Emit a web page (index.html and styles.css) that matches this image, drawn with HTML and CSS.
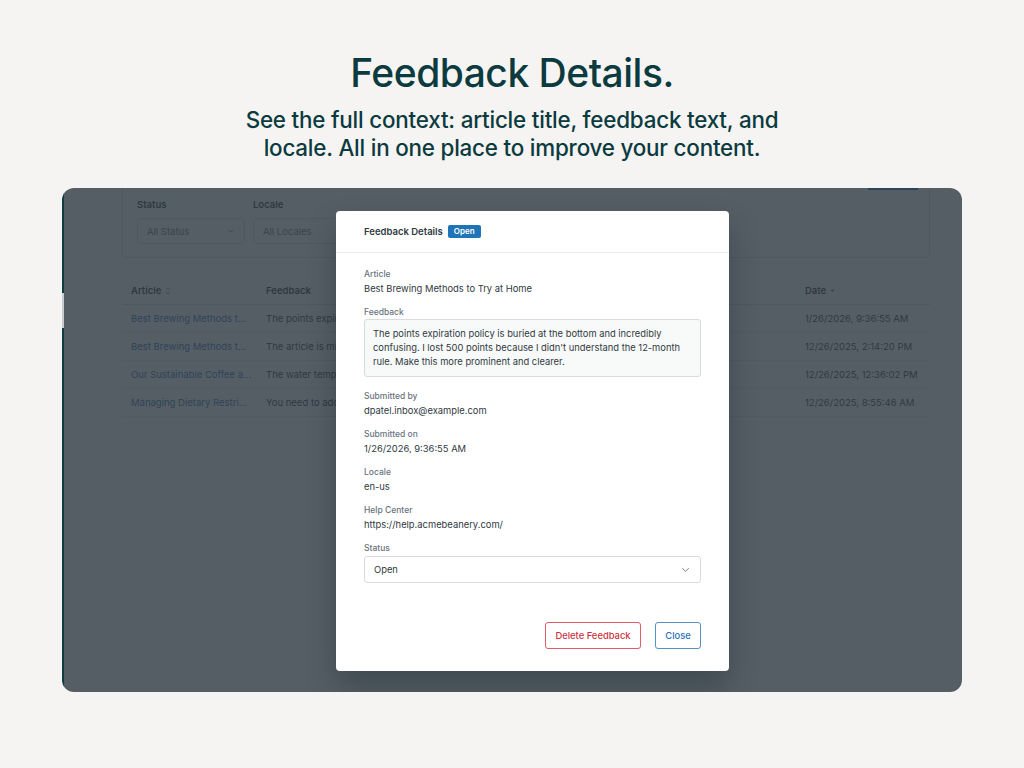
FILE: index.html
```html
<!DOCTYPE html>
<html lang="en">
<head>
<meta charset="utf-8">
<title>Feedback Details</title>
<link rel="stylesheet" href="styles.css">
</head>
<body>
<div class="page">
  <header class="hero">
    <h1 class="hero-title">Feedback Details.</h1>
    <p class="hero-sub">See the full context: article title, feedback text, and<br>locale. All in one place to improve your content.</p>
  </header>

  <section class="panel">
    <div class="rail"><span class="rail-active"></span></div>
    <div class="app">
      <div class="toolbar"><span class="btn-edge"></span></div>
      <div class="filter-card">
        <div class="filter">
          <div class="filter-label">Status</div>
          <div class="fselect fselect-status">
            <span>All Status</span>
            <svg class="chev" viewBox="0 0 12 12" width="10" height="10"><path d="M3 4.5l3 3 3-3" fill="none" stroke="currentColor" stroke-width="1"/></svg>
          </div>
        </div>
        <div class="filter">
          <div class="filter-label">Locale</div>
          <div class="fselect fselect-locale">
            <span>All Locales</span>
          </div>
        </div>
      </div>

      <div class="table">
        <div class="trow thead">
          <div class="c c-article">Article
            <svg class="sort" viewBox="0 0 10 12" width="8" height="10"><path d="M2.5 4.5L5 2l2.5 2.5M2.5 7.5L5 10l2.5-2.5" fill="none" stroke="currentColor" stroke-width="1"/></svg>
          </div>
          <div class="c c-feedback">Feedback</div>
          <div class="c c-locale">Locale</div>
          <div class="c c-status">Status</div>
          <div class="c c-date">Date
            <svg class="sortdown" viewBox="0 0 10 10" width="7" height="7"><path d="M2 4h6L5 7z" fill="currentColor"/></svg>
          </div>
        </div>
        <div class="trow">
          <div class="c c-article link">Best Brewing Methods t...</div>
          <div class="c c-feedback">The points expiration policy is buried...</div>
          <div class="c c-locale">en-us</div>
          <div class="c c-status">Open</div>
          <div class="c c-date">1/26/2026, 9:36:55 AM</div>
        </div>
        <div class="trow">
          <div class="c c-article link">Best Brewing Methods t...</div>
          <div class="c c-feedback">The article is missing a section...</div>
          <div class="c c-locale">en-us</div>
          <div class="c c-status">Open</div>
          <div class="c c-date">12/26/2025, 2:14:20 PM</div>
        </div>
        <div class="trow">
          <div class="c c-article link">Our Sustainable Coffee a...</div>
          <div class="c c-feedback">The water temperature guide is...</div>
          <div class="c c-locale">en-us</div>
          <div class="c c-status">Open</div>
          <div class="c c-date">12/26/2025, 12:36:02 PM</div>
        </div>
        <div class="trow">
          <div class="c c-article link">Managing Dietary Restri...</div>
          <div class="c c-feedback">You need to add more detail...</div>
          <div class="c c-locale">en-us</div>
          <div class="c c-status">Open</div>
          <div class="c c-date">12/26/2025, 8:55:46 AM</div>
        </div>
      </div>
      <div class="backdrop"></div>
    </div>

    <div class="modal">
      <div class="modal-head">
        <span class="modal-title">Feedback Details</span>
        <span class="badge">Open</span>
      </div>
      <div class="modal-body">
        <div class="field">
          <div class="label">Article</div>
          <div class="value">Best Brewing Methods to Try at Home</div>
        </div>
        <div class="field field-feedback">
          <div class="label label-tight">Feedback</div>
          <div class="quote">The points expiration policy is buried at the bottom and incredibly confusing. I lost 500 points because I didn't understand the 12-month rule. Make this more prominent and clearer.</div>
        </div>
        <div class="field">
          <div class="label">Submitted by</div>
          <div class="value">dpatel.inbox@example.com</div>
        </div>
        <div class="field">
          <div class="label">Submitted on</div>
          <div class="value">1/26/2026, 9:36:55 AM</div>
        </div>
        <div class="field">
          <div class="label">Locale</div>
          <div class="value">en-us</div>
        </div>
        <div class="field">
          <div class="label">Help Center</div>
          <div class="value">https://help.acmebeanery.com/</div>
        </div>
        <div class="field field-last">
          <div class="label">Status</div>
          <div class="mselect">
            <span>Open</span>
            <svg class="mchev" viewBox="0 0 12 12" width="11" height="11"><path d="M2.5 4.5L6 8l3.5-3.5" fill="none" stroke="currentColor" stroke-width="1"/></svg>
          </div>
        </div>
      </div>
      <div class="modal-foot">
        <button class="btn btn-danger">Delete Feedback</button>
        <button class="btn btn-basic">Close</button>
      </div>
    </div>
  </section>
</div>
</body>
</html>
```

FILE: styles.css
```css
* { box-sizing: border-box; }

html, body {
  margin: 0;
  padding: 0;
}

body {
  background: #f5f4f2;
  font-family: Inter, "Noto Sans", "Liberation Sans", sans-serif;
  color: #2f3941;
}

.page {
  width: 1024px;
  height: 768px;
  display: flex;
  flex-direction: column;
  align-items: center;
  overflow: hidden;
}

.hero {
  text-align: center;
  color: #0b3a3f;
  padding-top: 49px;
}

.hero-title {
  margin: 0;
  font-size: 39px;
  line-height: 48px;
  font-weight: 500;
  letter-spacing: -0.5px;
}

.hero-sub {
  margin: 9px 0 0;
  font-size: 22.4px;
  line-height: 28px;
  font-weight: 500;
  letter-spacing: -0.2px;
}

.panel {
  position: relative;
  margin-top: 26px;
  width: 900px;
  height: 504px;
  border-radius: 12px;
  overflow: hidden;
  display: flex;
  background: #fff;
}

.rail {
  width: 2px;
  flex: none;
  background: #0d3d42;
  display: flex;
  flex-direction: column;
  padding-top: 105px;
}

.rail-active {
  display: block;
  height: 35px;
  background: #c8ccce;
}

.app {
  position: relative;
  flex: 1;
  background: #fff;
  padding-left: 58px;
  font-size: 9.5px;
}

.toolbar {
  display: flex;
  justify-content: flex-end;
  width: 808px;
  height: 0;
}

.btn-edge {
  display: block;
  width: 50px;
  height: 2px;
  margin-right: 12px;
  background: #1f73b7;
}

.filter-card {
  width: 808px;
  height: 70px;
  border: 1px solid #d8dcde;
  border-top: none;
  border-radius: 0 0 4px 4px;
  padding: 11px 14px 0;
  display: flex;
  gap: 8px;
}

.filter-label {
  font-weight: 600;
  line-height: 12px;
  height: 12px;
  margin-bottom: 7px;
  color: #2f3941;
}

.fselect {
  height: 26px;
  border: 1px solid #d8dcde;
  border-radius: 4px;
  display: flex;
  align-items: center;
  justify-content: space-between;
  padding: 0 8px 0 9px;
  color: #68737d;
}

.fselect-status { width: 108px; }
.fselect-locale { width: 110px; }

.chev { color: #68737d; }

.table {
  width: 808px;
  margin-top: 19px;
}

.trow {
  display: flex;
  height: 28px;
  align-items: center;
  border-bottom: 1px solid #e9ebed;
}

.thead {
  font-weight: 600;
  color: #2f3941;
  border-bottom-color: #d8dcde;
}

.c {
  padding: 0 9px;
  white-space: nowrap;
  overflow: hidden;
  display: flex;
  align-items: center;
  gap: 3px;
}

.c-article { width: 135px; }
.c-feedback { width: 300px; }
.c-locale { width: 120px; }
.c-status { width: 119px; }
.c-date { width: 134px; }

.link { color: #1f73b7; }

.sort, .sortdown { color: #68737d; }

.backdrop {
  position: absolute;
  inset: 0;
  background: rgba(47, 57, 65, 0.81);
}

.modal {
  position: absolute;
  left: 274px;
  top: 23px;
  width: 393px;
  background: #fff;
  border-radius: 4px;
  box-shadow: 0 16px 30px rgba(4, 20, 30, 0.28);
  color: #2f3941;
}

.modal-head {
  height: 42px;
  border-bottom: 1px solid #e9ebed;
  padding: 0 28px;
  display: flex;
  align-items: center;
  gap: 5px;
}

.modal-title {
  font-size: 9.5px;
  font-weight: 600;
}

.badge {
  background: #1f73b7;
  color: #fff;
  font-size: 8px;
  font-weight: 600;
  line-height: 13px;
  height: 13px;
  padding: 0 6px;
  border-radius: 2px;
}

.modal-body {
  padding: 15px 28px 0;
}

.field {
  margin-bottom: 10px;
}

.field-feedback { margin-bottom: 13px; }
.field-last { margin-bottom: 0; }

.label {
  font-size: 8.5px;
  font-weight: 500;
  line-height: 12px;
  color: #68737d;
  margin-bottom: 2px;
}

.label-tight { margin-bottom: 1px; }

.value {
  font-size: 9.4px;
  line-height: 14px;
}

.quote {
  background: #f8f9f9;
  border: 1px solid #d8dcde;
  border-radius: 3px;
  padding: 7px 8px;
  font-size: 9.35px;
  line-height: 14px;
}

.mselect {
  height: 27px;
  border: 1px solid #d8dcde;
  border-radius: 3px;
  display: flex;
  align-items: center;
  justify-content: space-between;
  padding: 0 9px;
  font-size: 9.4px;
}

.mchev { color: #68737d; }

.modal-foot {
  display: flex;
  justify-content: flex-end;
  gap: 14px;
  padding: 39px 28px 22px;
}

.btn {
  height: 27px;
  font-family: inherit;
  font-size: 9.4px;
  font-weight: 500;
  background: #fff;
  border-radius: 3px;
  padding: 0;
  white-space: nowrap;
  cursor: pointer;
}

.btn-danger {
  width: 96px;
  border: 1px solid #e35b66;
  color: #cc3340;
}

.btn-basic {
  width: 46px;
  border: 1px solid #5293c7;
  color: #1f73b7;
}
```
